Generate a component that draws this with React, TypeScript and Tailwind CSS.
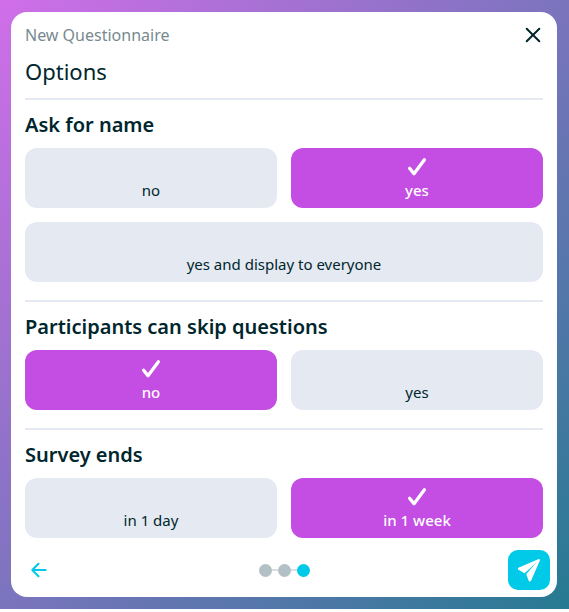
import { useState } from 'react'
import { IoArrowBack } from 'react-icons/io5'

interface OptionGroup {
  name: string
  title: string
  options: string[]
  selected: string
}

const groups: OptionGroup[] = [
  {
    name: 'askForName',
    title: 'Ask for name',
    options: ['no', 'yes', 'yes and display to everyone'],
    selected: 'yes',
  },
  {
    name: 'skipQuestions',
    title: 'Participants can skip questions',
    options: ['no', 'yes'],
    selected: 'no',
  },
  {
    name: 'surveyEnds',
    title: 'Survey ends',
    options: ['in 1 day', 'in 1 week'],
    selected: 'in 1 week',
  },
]

function CheckIcon() {
  return (
    <svg width="20" height="20" viewBox="0 0 20 20" fill="none" aria-hidden="true">
      <path
        d="M2.6 11.2L7 16.8L17.4 2.8"
        stroke="currentColor"
        strokeWidth="3.3"
        strokeLinecap="round"
        strokeLinejoin="round"
      />
    </svg>
  )
}

function CloseIcon() {
  return (
    <svg width="24" height="24" viewBox="0 0 24 24" fill="none" aria-hidden="true">
      <path d="M5.7 5.7L18.3 18.3M18.3 5.7L5.7 18.3" stroke="currentColor" strokeWidth="2" strokeLinecap="round" />
    </svg>
  )
}

function SendIcon() {
  return (
    <svg width="34" height="34" viewBox="0 0 34 34" fill="currentColor" aria-hidden="true">
      <g stroke="currentColor" strokeWidth="1.2" strokeLinejoin="round">
        <path d="M27 6.6L6.6 15.3Q6.2 15.9 6.8 16.3L12.4 19.6Z" />
        <path d="M27.4 7L14.9 21.4L17.3 27.5Q17.9 28.2 18.5 27.6Z" />
      </g>
    </svg>
  )
}

function OptionSection({ group }: { group: OptionGroup }) {
  const [value, setValue] = useState(group.selected)

  return (
    <fieldset
      aria-labelledby={group.name}
      className="border-t-2 border-[#e5eaf2] pt-[11px] pb-[18px] last:pb-3"
    >
      <h2 id={group.name} className="text-xl leading-7 font-semibold">
        {group.title}
      </h2>
      <div className="mt-[9px] grid grid-cols-2 gap-[14px]">
        {group.options.map((option) => (
          <label
            key={option}
            className="relative flex h-[60px] cursor-pointer flex-col items-center justify-end rounded-xl bg-[#e5eaf2] pb-2 text-[15px] leading-5 odd:last:col-span-2 has-checked:bg-[#c44de4] has-checked:font-medium has-checked:text-white"
          >
            <input
              type="radio"
              className="sr-only"
              name={group.name}
              value={option}
              checked={value === option}
              onChange={() => setValue(option)}
            />
            {value === option && <CheckIcon />}
            <span className="mt-[3px]">{option}</span>
          </label>
        ))}
      </div>
    </fieldset>
  )
}

export default function App() {
  return (
    <div className="bg-linear-to-br/srgb from-[#d06ee9] to-[#267a92] py-3 pr-3 pl-[11px] font-['Noto_Sans',sans-serif] text-[#00262d]">
      <main className="rounded-2xl bg-white">
        <header className="px-[14px] pt-[11px]">
          <div className="flex items-center justify-between">
            <p className="text-base leading-6 text-[#778a8f]">New Questionnaire</p>
            <button type="button" aria-label="Close" className="-mr-0.5">
              <CloseIcon />
            </button>
          </div>
          <h1 className="mt-2 mb-[11px] text-[22px] leading-8">Options</h1>
        </header>

        <form className="px-[14px]">
          {groups.map((group) => (
            <OptionSection key={group.name} group={group} />
          ))}
        </form>

        <footer className="flex items-center justify-between px-[7px] pb-[7px]">
          <button
            type="button"
            aria-label="Back"
            className="flex h-10 w-[42px] items-center justify-center text-[#00cae8]"
          >
            <IoArrowBack size={22} />
          </button>
          <div className="flex items-center">
            <span className="size-[13px] rounded-full bg-[#b3c0c6]" />
            <span className="h-[2px] w-[6px] bg-[#d9dfe5]" />
            <span className="size-[13px] rounded-full bg-[#b3c0c6]" />
            <span className="h-[2px] w-[6px] bg-[#d9dfe5]" />
            <span className="size-[13px] rounded-full bg-[#00cae8]" />
          </div>
          <button
            type="button"
            aria-label="Send"
            className="flex h-10 w-[42px] items-center justify-center rounded-[10px] bg-[#00cae8] text-white"
          >
            <SendIcon />
          </button>
        </footer>
      </main>
    </div>
  )
}
